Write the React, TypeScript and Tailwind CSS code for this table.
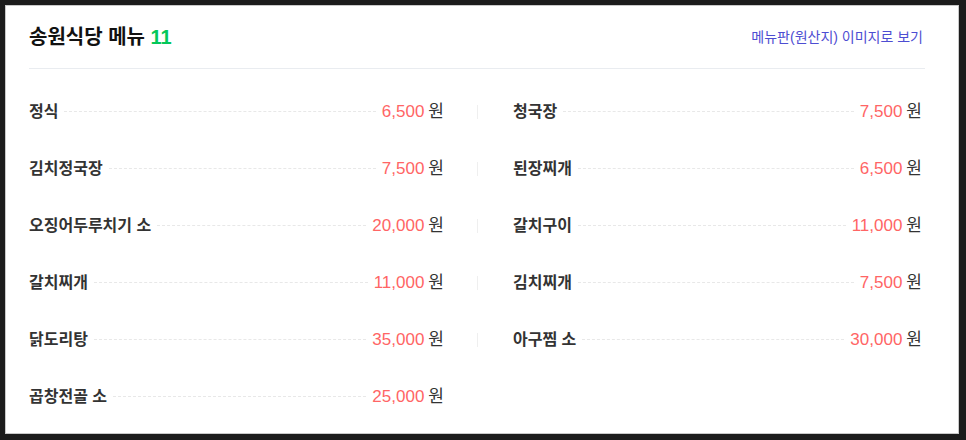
import React from "react";

type MenuItem = { name: string; price: string };

const menuItems: MenuItem[] = [
  { name: "정식", price: "6,500" },
  { name: "청국장", price: "7,500" },
  { name: "김치정국장", price: "7,500" },
  { name: "된장찌개", price: "6,500" },
  { name: "오징어두루치기 소", price: "20,000" },
  { name: "갈치구이", price: "11,000" },
  { name: "갈치찌개", price: "11,000" },
  { name: "김치찌개", price: "7,500" },
  { name: "닭도리탕", price: "35,000" },
  { name: "아구찜 소", price: "30,000" },
  { name: "곱창전골 소", price: "25,000" },
];

function Row({ item }: { item: MenuItem }) {
  return (
    <div className="flex items-center h-full">
      <span className="text-[16px] font-bold text-[#333] whitespace-nowrap">{item.name}</span>
      <span className="flex-1 mx-[6px] border-t border-dashed border-[#e8e8e8]" />
      <span className="text-[17px] text-[#ff6565] whitespace-nowrap">{item.price}</span>
      <span className="ml-[4px] text-[17px] text-[#333] whitespace-nowrap">원</span>
    </div>
  );
}

export default function App() {
  return (
    <div
      className="w-[966px] h-[440px] bg-[#1c1c1c] pt-[5px] pl-[5px] pr-[7px] pb-[6px]"
      style={{ fontFamily: '"Liberation Sans", "Noto Sans CJK KR", sans-serif' }}
    >
      <div className="h-full bg-white border border-[#c9c9c9] pl-[23px] pr-[33px]">
        {/* Header */}
        <div className="h-[63px] flex items-center justify-between border-b border-[#e9ecf0]">
          <h1 className="text-[20px] font-bold text-[#111]">
            송원식당 메뉴 <span className="text-[#03c75a]">11</span>
          </h1>
          <a className="text-[14px] text-[#4d4dd2] mr-[2px]">메뉴판(원산지) 이미지로 보기</a>
        </div>

        {/* Menu Grid */}
        <div className="grid grid-cols-2 mt-[14px]">
          {menuItems.map((item, i) =>
            i % 2 === 0 ? (
              <div key={item.name} className="h-[57px] pr-[33px]">
                <Row item={item} />
              </div>
            ) : (
              <div key={item.name} className="h-[57px] flex items-center">
                <span className="w-px h-[14px] bg-[#efefef]" />
                <div className="flex-1 h-full pl-[35px] pr-[3px]">
                  <Row item={item} />
                </div>
              </div>
            )
          )}
        </div>
      </div>
    </div>
  );
}
